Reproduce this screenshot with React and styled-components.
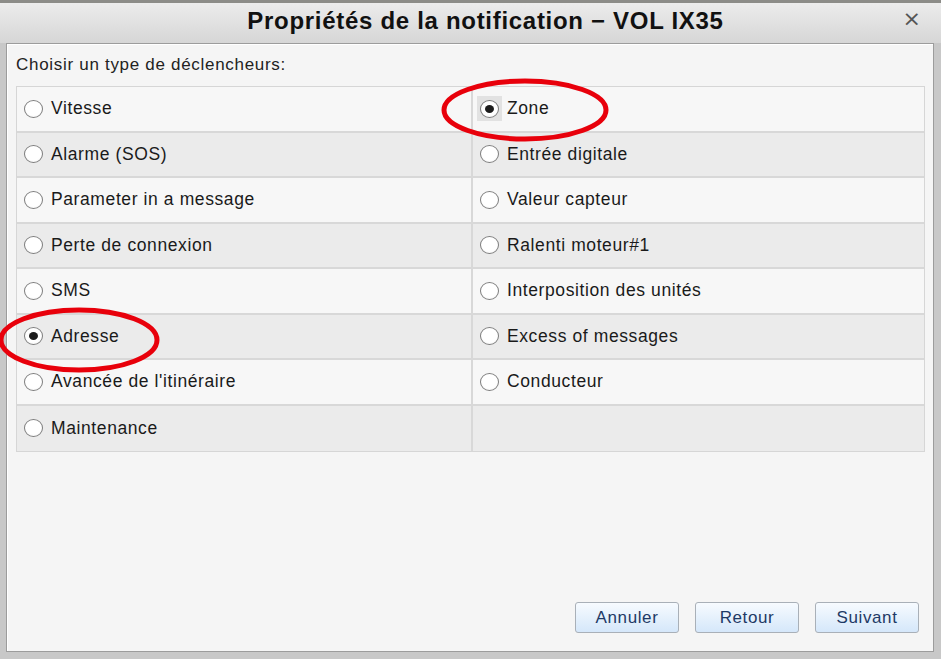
import React from "react";
import styled, { createGlobalStyle } from "styled-components";

const GlobalStyle = createGlobalStyle`
  html, body {
    margin: 0;
    padding: 0;
    background: #c8c8c8;
  }
  body {
    font-family: "Liberation Sans", Arial, sans-serif;
  }
`;

const Window = styled.div`
  position: relative;
  width: 941px;
  height: 659px;
  background: #c8c8c8;
  border-top: 3px solid #8c8c88;
  box-sizing: border-box;
  display: flex;
  flex-direction: column;
  overflow: hidden;
`;

const TitleBar = styled.div`
  height: 40px;
  flex: none;
  display: flex;
  align-items: center;
  justify-content: center;
  padding: 0 0 4px 30px;
  box-sizing: border-box;
  position: relative;
  background: linear-gradient(#ececec, #d6d6d6);
`;

const Title = styled.h1`
  margin: 0;
  font-size: 24px;
  font-weight: 700;
  color: #111;
  letter-spacing: 0.7px;
`;

const CloseButton = styled.span`
  position: absolute;
  right: 20px;
  top: 5px;
  font-family: "DejaVu Sans", sans-serif;
  font-size: 22px;
  color: #555;
  line-height: 1;
`;

const Panel = styled.div`
  flex: 1;
  margin: 0 7px 7px 6px;
  background: #f5f5f5;
  border: 1px solid #9c9c9c;
  box-shadow: inset 1px 1px 0 #ffffff;
  display: flex;
  flex-direction: column;
  padding: 10px 8px 18px 9px;
  position: relative;
`;

const Prompt = styled.div`
  font-size: 17px;
  letter-spacing: 0.7px;
  color: #222;
  height: 32px;
  line-height: 22px;
`;

const Grid = styled.div`
  display: grid;
  grid-template-columns: 454px 1fr;
  border: 1px solid #d6d6d6;
`;

const Cell = styled.label`
  height: 45.5px;
  box-sizing: border-box;
  display: flex;
  align-items: center;
  gap: 5px;
  padding-left: 4px;
  background: ${(p) => (p.$alt ? "#ebebeb" : "#f7f7f7")};
  border-bottom: ${(p) => (p.$last ? "0" : "2px solid #d8d8d8")};
  border-left: ${(p) => (p.$right ? "2px solid #d8d8d8" : "0")};
  font-size: 17.5px;
  letter-spacing: 0.6px;
  color: #1a1a1a;
`;

const RadioWrap = styled.span`
  width: 25px;
  height: 25px;
  display: flex;
  align-items: center;
  justify-content: center;
  background: ${(p) => (p.$focus ? "#e2e2e2" : "transparent")};
`;

const Radio = styled.span`
  width: 19px;
  height: 18px;
  box-sizing: border-box;
  border-radius: 50%;
  border: 1px solid #7d7d7d;
  background: radial-gradient(circle at 50% 40%, #ffffff 60%, #ececec);
  display: flex;
  align-items: center;
  justify-content: center;

  &::after {
    content: "";
    display: ${(p) => (p.$checked ? "block" : "none")};
    width: 9px;
    height: 8px;
    border-radius: 50%;
    background: #1c1c1c;
  }
`;

const Footer = styled.div`
  margin-top: auto;
  display: flex;
  justify-content: flex-end;
  gap: 16px;
  padding-right: 6px;
`;

const Button = styled.button`
  width: 104px;
  height: 31px;
  border: 1px solid #a9b0b8;
  border-radius: 3px;
  background: linear-gradient(#f7fbff, #e4f0fc 55%, #d5e7fa);
  color: #1e3a66;
  font-family: "Liberation Sans", Arial, sans-serif;
  font-size: 17px;
  letter-spacing: 0.6px;
  padding: 0;
`;

const Marks = styled.svg`
  position: absolute;
  left: 0;
  top: 0;
  pointer-events: none;
`;

const left = [
  ["Vitesse", false],
  ["Alarme (SOS)", false],
  ["Parameter in a message", false],
  ["Perte de connexion", false],
  ["SMS", false],
  ["Adresse", true],
  ["Avancée de l'itinéraire", false],
  ["Maintenance", false],
];

const right = [
  ["Zone", true],
  ["Entrée digitale", false],
  ["Valeur capteur", false],
  ["Ralenti moteur#1", false],
  ["Interposition des unités", false],
  ["Excess of messages", false],
  ["Conducteur", false],
  null,
];

const Option = ({ item, alt, last, isRight, focus }) => (
  <Cell $alt={alt} $last={last} $right={isRight}>
    {item && (
      <>
        <RadioWrap $focus={focus}>
          <Radio $checked={item[1]} />
        </RadioWrap>
        {item[0]}
      </>
    )}
  </Cell>
);

export default function App() {
  return (
    <>
      <GlobalStyle />
      <Window>
        <TitleBar>
          <Title>Propriétés de la notification − VOL IX35</Title>
          <CloseButton>×</CloseButton>
        </TitleBar>
        <Panel>
          <Prompt>Choisir un type de déclencheurs:</Prompt>
          <Grid>
            {left.map((item, i) => (
              <React.Fragment key={i}>
                <Option item={item} alt={i % 2 === 1} last={i === 7} />
                <Option
                  item={right[i]}
                  alt={i % 2 === 1}
                  last={i === 7}
                  isRight
                  focus={i === 0}
                />
              </React.Fragment>
            ))}
          </Grid>
          <Footer>
            <Button>Annuler</Button>
            <Button>Retour</Button>
            <Button>Suivant</Button>
          </Footer>
        </Panel>
        <Marks width="941" height="659">
          <ellipse cx="525" cy="107" rx="81" ry="29" fill="none" stroke="#e8000b" strokeWidth="5" />
          <ellipse cx="79" cy="337" rx="78" ry="30" fill="none" stroke="#e8000b" strokeWidth="5" />
        </Marks>
      </Window>
    </>
  );
}
